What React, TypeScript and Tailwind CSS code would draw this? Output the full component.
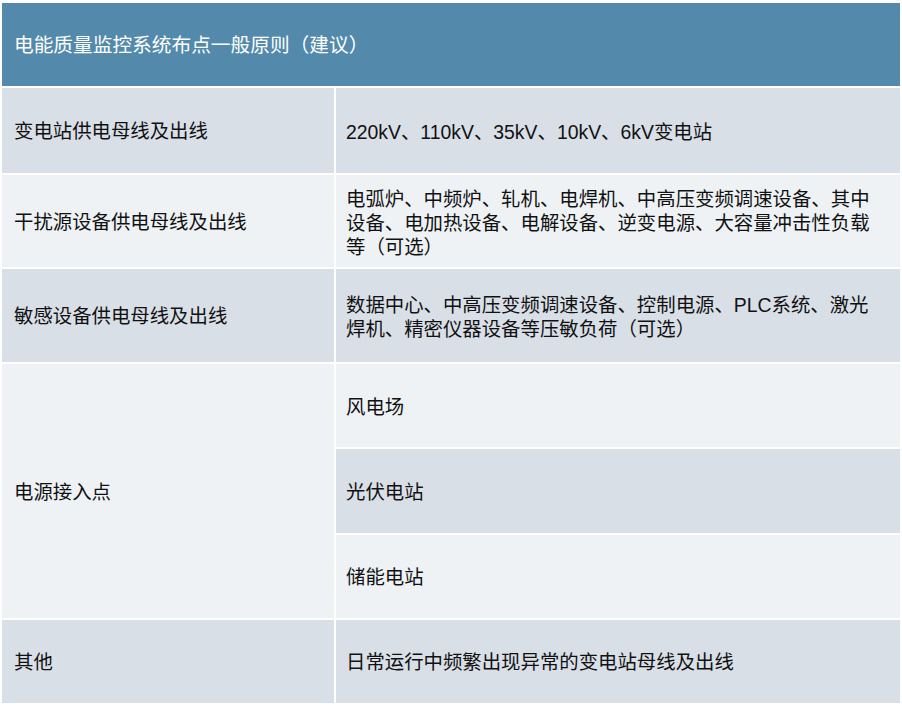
const FONT = "font-['Liberation_Sans','Noto_Sans_CJK_SC',sans-serif]";

type Row = {
  label: string;
  lines: string[];
  height: string;
  tone: "gray" | "light";
};

const rows: Row[] = [
  {
    label: "变电站供电母线及出线",
    lines: ["220kV、110kV、35kV、10kV、6kV变电站"],
    height: "h-[85px]",
    tone: "gray",
  },
  {
    label: "干扰源设备供电母线及出线",
    lines: [
      "电弧炉、中频炉、轧机、电焊机、中高压变频调速设备、其中",
      "设备、电加热设备、电解设备、逆变电源、大容量冲击性负载",
      "等（可选）",
    ],
    height: "h-[92px]",
    tone: "light",
  },
  {
    label: "敏感设备供电母线及出线",
    lines: [
      "数据中心、中高压变频调速设备、控制电源、PLC系统、激光",
      "焊机、精密仪器设备等压敏负荷（可选）",
    ],
    height: "h-[93px]",
    tone: "gray",
  },
];

const bg = (tone: "gray" | "light") =>
  tone === "gray" ? "bg-[#d9dfe7]" : "bg-[#eef2f5]";

export default function App() {
  return (
    <main
      className={`w-[902px] h-[707px] bg-white pt-[3px] px-[2px] text-[19.4px] text-[#111] ${FONT}`}
    >
      <div className="flex flex-col gap-[2px]">
        {/* Header */}
        <div className="h-[83px] bg-[#538aab] flex items-center pl-[12px] pt-[2px] text-white text-[19.7px]">
          电能质量监控系统布点一般原则（建议）
        </div>

        {rows.map((r) => (
          <div key={r.label} className={`grid grid-cols-[332px_1fr] gap-[2px] ${r.height}`}>
            <div className={`${bg(r.tone)} flex items-center pl-[12px] pt-[3px]`}>{r.label}</div>
            <div className={`${bg(r.tone)} flex flex-col justify-center pl-[10px] pt-[3px] leading-[24px] whitespace-nowrap`}>
              {r.lines.map((l) => (
                <div key={l}>{l}</div>
              ))}
            </div>
          </div>
        ))}

        {/* 电源接入点 */}
        <div className="grid grid-cols-[332px_1fr] gap-[2px] h-[254px]">
          <div className="bg-[#eef2f5] flex items-center pl-[12px] pt-[3px]">电源接入点</div>
          <div className="grid grid-rows-3 gap-[2px]">
            <div className="bg-[#eef2f5] flex items-center pl-[10px] pt-[3px]">风电场</div>
            <div className="bg-[#d9dfe7] flex items-center pl-[10px] pt-[3px]">光伏电站</div>
            <div className="bg-[#eef2f5] flex items-center pl-[10px] pt-[3px]">储能电站</div>
          </div>
        </div>

        {/* Others */}
        <div className="grid grid-cols-[332px_1fr] gap-[2px] h-[83px]">
          <div className="bg-[#d9dfe7] flex items-center pl-[12px] pt-[3px]">其他</div>
          <div className="bg-[#d9dfe7] flex items-center pl-[10px] pt-[3px]">日常运行中频繁出现异常的变电站母线及出线</div>
        </div>
      </div>
    </main>
  );
}
